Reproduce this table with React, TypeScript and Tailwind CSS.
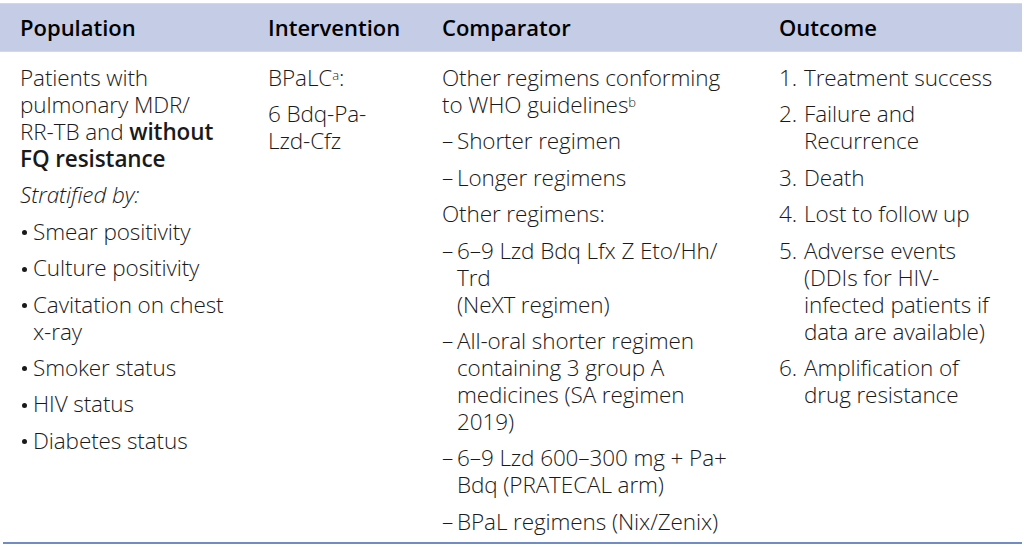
import React from "react";

const Dash = ({ children }: { children: React.ReactNode }) => (
  <div className="flex">
    <span className="w-[15px] shrink-0">–</span>
    <span>{children}</span>
  </div>
);

const Bullet = ({ children }: { children: React.ReactNode }) => (
  <div className="flex">
    <span className="flex h-[27px] w-[13px] shrink-0 items-center pl-[2px] pt-[3px]">
      <span className="h-[5px] w-[5px] rounded-full bg-[#1a1a1a]" />
    </span>
    <span>{children}</span>
  </div>
);

const Num = ({ n, children }: { n: number; children: React.ReactNode }) => (
  <div className="flex">
    <span className="w-[25px] shrink-0">{n}.</span>
    <span>{children}</span>
  </div>
);

export default function App() {
  return (
    <div
      className="h-[547px] w-[1024px] overflow-hidden bg-white pt-[3px] text-[#1a1a1a]"
      style={{ fontFamily: '"Open Sans", "Noto Sans", sans-serif' }}
    >
      <div className="mr-[2px]">
        {/* Header */}
        <div className="grid h-[49px] grid-cols-[258px_174px_337px_1fr] items-center border-t border-b border-[#d4d8e2] bg-[#c4cce6] text-[22px] font-semibold text-black">
          <div className="pl-[20px]">Population</div>
          <div className="pl-[10px]">Intervention</div>
          <div className="pl-[10px]">Comparator</div>
          <div className="pl-[10px]">Outcome</div>
        </div>

        {/* Body */}
        <div className="grid grid-cols-[258px_174px_337px_1fr] pt-[12px] pb-[7px] text-[22.5px] font-[350] leading-[27px] tracking-[-0.1px] whitespace-nowrap">
          <div className="flex flex-col gap-[9.4px] pl-[20px]">
            <div>
              Patients with
              <br />
              pulmonary MDR/
              <br />
              RR-TB and <span className="font-semibold">without</span>
              <br />
              <span className="font-semibold">FQ resistance</span>
            </div>
            <div className="italic">Stratified by:</div>
            <Bullet>Smear positivity</Bullet>
            <Bullet>Culture positivity</Bullet>
            <Bullet>
              Cavitation on chest
              <br />
              x-ray
            </Bullet>
            <Bullet>Smoker status</Bullet>
            <Bullet>HIV status</Bullet>
            <Bullet>Diabetes status</Bullet>
          </div>

          <div className="flex flex-col gap-[9.4px] pl-[10px]">
            <div>
              BPaLC<sup className="text-[13px] leading-none">a</sup>:
            </div>
            <div>
              6 Bdq-Pa-
              <br />
              Lzd-Cfz
            </div>
          </div>

          <div className="flex flex-col gap-[9.4px] pl-[10px]">
            <div>
              Other regimens conforming
              <br />
              to WHO guidelines<sup className="text-[13px] leading-none">b</sup>
            </div>
            <Dash>Shorter regimen</Dash>
            <Dash>Longer regimens</Dash>
            <div>Other regimens:</div>
            <Dash>
              6–9 Lzd Bdq Lfx Z Eto/Hh/
              <br />
              Trd
              <br />
              (NeXT regimen)
            </Dash>
            <Dash>
              All-oral shorter regimen
              <br />
              containing 3 group A
              <br />
              medicines (SA regimen
              <br />
              2019)
            </Dash>
            <Dash>
              6–9 Lzd 600–300 mg + Pa+
              <br />
              Bdq (PRATECAL arm)
            </Dash>
            <Dash>BPaL regimens (Nix/Zenix)</Dash>
          </div>

          <div className="flex flex-col gap-[9.4px] pl-[10px]">
            <Num n={1}>Treatment success</Num>
            <Num n={2}>
              Failure and
              <br />
              Recurrence
            </Num>
            <Num n={3}>Death</Num>
            <Num n={4}>Lost to follow up</Num>
            <Num n={5}>
              Adverse events
              <br />
              (DDIs for HIV-
              <br />
              infected patients if
              <br />
              data are available)
            </Num>
            <Num n={6}>
              Amplification of
              <br />
              drug resistance
            </Num>
          </div>
        </div>

        {/* Bottom rule */}
        <div className="ml-[3px] h-[2px] bg-[#6f8cc9]" />
      </div>
    </div>
  );
}
